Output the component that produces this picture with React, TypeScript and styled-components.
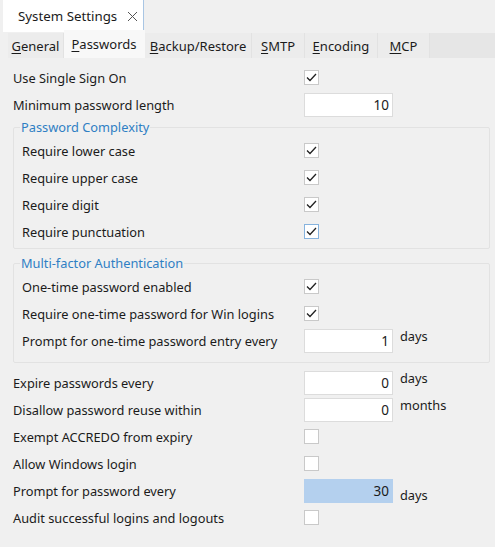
import React from "react";
import styled, { createGlobalStyle } from "styled-components";

const GlobalStyle = createGlobalStyle`
  html, body {
    margin: 0;
    padding: 0;
    background: #ffffff;
  }
  body {
    font-family: "Noto Sans", "Open Sans", sans-serif;
    font-size: 12.8px;
    color: #1b1b1b;
  }
`;

const Window = styled.div`
  width: 495px;
  height: 547px;
  background: #f0f0f0;
  display: flex;
  flex-direction: column;
`;

const TitleBar = styled.div`
  height: 32px;
  display: flex;
  align-items: stretch;
  background: #f0f0f0;
`;

const TitleTab = styled.div`
  width: 141px;
  margin-left: 3px;
  background: #ffffff;
  border-right: 1px solid #a9c6e4;
  display: flex;
  align-items: center;
  gap: 10px;
  padding-left: 15px;
  box-sizing: border-box;
  font-size: 13.3px;
  white-space: nowrap;
`;

const TabStrip = styled.div`
  height: 26px;
  display: flex;
  align-items: flex-end;
  padding-left: 8px;
  background: #f0f0f0;
`;

const Tab = styled.div<{ $active?: boolean; $width: number }>`
  width: ${(p) => p.$width}px;
  height: ${(p) => (p.$active ? 28 : 25)}px;
  box-sizing: border-box;
  display: flex;
  align-items: center;
  justify-content: center;
  background: ${(p) => (p.$active ? "#f8f8f8" : "#ececec")};
  border-right: 1px solid ${(p) => (p.$active ? "#f8f8f8" : "#e2e2e2")};
  font-size: 13px;
  white-space: nowrap;
  color: #1b1b1b;

  u {
    text-decoration-thickness: 1px;
    text-underline-offset: 2px;
  }
`;

const StripFill = styled.div`
  flex: 1;
  height: 25px;
  background: #e6e6e6;
`;

const Content = styled.div`
  flex: 1;
  padding: 6px 5px 0 13px;
  display: flex;
  flex-direction: column;
`;

const Row = styled.div<{ $labelWidth: number }>`
  height: 27px;
  display: grid;
  grid-template-columns: ${(p) => p.$labelWidth}px 89px auto;
  align-items: center;
`;

const Label = styled.span`
  white-space: nowrap;
`;

const Group = styled.fieldset<{ $top: number; $bottom: number }>`
  margin: ${(p) => p.$top}px 0 0 0;
  padding: 0 0 ${(p) => p.$bottom}px 8px;
  border: 1px solid #e2e2e2;
  border-radius: 2px;
  width: 477px;
  box-sizing: border-box;
`;

const Legend = styled.legend`
  padding: 0 1px;
  margin-left: -2px;
  color: #2f7fc4;
  line-height: 19px;
  font-size: 12.8px;
`;

const Spacer = styled.div<{ $h: number }>`
  height: ${(p) => p.$h}px;
`;

const Box = styled.div<{ $focused?: boolean }>`
  width: 15px;
  height: 15px;
  box-sizing: border-box;
  background: #ffffff;
  border: 1px solid ${(p) => (p.$focused ? "#86b3de" : "#c9c9c9")};
  display: flex;
  align-items: center;
  justify-content: center;
`;

const NumberBox = styled.div<{ $selected?: boolean }>`
  width: 89px;
  height: 24px;
  box-sizing: border-box;
  background: ${(p) => (p.$selected ? "#b4d0ee" : "#ffffff")};
  border: 1px solid ${(p) => (p.$selected ? "#b4d0ee" : "#dcdcdc")};
  display: flex;
  align-items: center;
  justify-content: flex-end;
  padding-right: 3px;
  font-size: 13.5px;
`;

const Unit = styled.span<{ $drop?: boolean }>`
  margin-left: 7px;
  position: relative;
  top: ${(p) => (p.$drop ? 4 : -5)}px;
`;

type Field =
  | { label: string; kind: "check"; checked: boolean; focused?: boolean }
  | { label: string; kind: "number"; value: string; unit?: string; selected?: boolean; drop?: boolean };

const CloseIcon = () => (
  <svg width="11" height="11" viewBox="0 0 11 11">
    <path d="M1 1 L10 10 M10 1 L1 10" stroke="#555" strokeWidth="1" fill="none" />
  </svg>
);

const Check = ({ checked, focused }: { checked: boolean; focused?: boolean }) => (
  <Box $focused={focused}>
    {checked && (
      <svg width="11" height="9" viewBox="0 0 11 9">
        <polyline points="1,4.5 4,7.5 10,1" fill="none" stroke="#222" strokeWidth="1.3" />
      </svg>
    )}
  </Box>
);

const SettingRow = ({ field, labelWidth }: { field: Field; labelWidth: number }) => (
  <Row $labelWidth={labelWidth}>
    <Label>{field.label}</Label>
    {field.kind === "check" ? (
      <Check checked={field.checked} focused={field.focused} />
    ) : (
      <>
        <NumberBox $selected={field.selected}>{field.value}</NumberBox>
        {field.unit && <Unit $drop={field.drop}>{field.unit}</Unit>}
      </>
    )}
  </Row>
);

const topFields: Field[] = [
  { label: "Use Single Sign On", kind: "check", checked: true },
  { label: "Minimum password length", kind: "number", value: "10" },
];

const complexity: Field[] = [
  { label: "Require lower case", kind: "check", checked: true },
  { label: "Require upper case", kind: "check", checked: true },
  { label: "Require digit", kind: "check", checked: true },
  { label: "Require punctuation", kind: "check", checked: true, focused: true },
];

const mfa: Field[] = [
  { label: "One-time password enabled", kind: "check", checked: true },
  { label: "Require one-time password for Win logins", kind: "check", checked: true },
  { label: "Prompt for one-time password entry every", kind: "number", value: "1", unit: "days" },
];

const bottomFields: Field[] = [
  { label: "Expire passwords every", kind: "number", value: "0", unit: "days" },
  { label: "Disallow password reuse within", kind: "number", value: "0", unit: "months" },
  { label: "Exempt ACCREDO from expiry", kind: "check", checked: false },
  { label: "Allow Windows login", kind: "check", checked: false },
  { label: "Prompt for password every", kind: "number", value: "30", unit: "days", selected: true, drop: true },
  { label: "Audit successful logins and logouts", kind: "check", checked: false },
];

const tabs = [
  { key: "G", rest: "eneral", width: 56 },
  { key: "P", rest: "asswords", width: 81, active: true },
  { key: "B", rest: "ackup/Restore", width: 107 },
  { key: "S", rest: "MTP", width: 53 },
  { key: "E", rest: "ncoding", width: 73 },
  { key: "M", rest: "CP", width: 52 },
];

export default function App() {
  return (
    <>
      <GlobalStyle />
      <Window>
        <TitleBar>
          <TitleTab>
            System Settings <CloseIcon />
          </TitleTab>
        </TitleBar>
        <TabStrip>
          {tabs.map((t) => (
            <Tab key={t.key} $active={t.active} $width={t.width}>
              <u>{t.key}</u>
              {t.rest}
            </Tab>
          ))}
          <StripFill />
        </TabStrip>
        <Content>
          {topFields.map((f) => (
            <SettingRow key={f.label} field={f} labelWidth={291} />
          ))}
          <Group $top={0} $bottom={3}>
            <Legend>Password Complexity</Legend>
            {complexity.map((f) => (
              <SettingRow key={f.label} field={f} labelWidth={282} />
            ))}
          </Group>
          <Group $top={5} $bottom={8}>
            <Legend>Multi-factor Authentication</Legend>
            {mfa.map((f) => (
              <SettingRow key={f.label} field={f} labelWidth={282} />
            ))}
          </Group>
          <Spacer $h={6} />
          {bottomFields.map((f) => (
            <SettingRow key={f.label} field={f} labelWidth={291} />
          ))}
        </Content>
      </Window>
    </>
  );
}
